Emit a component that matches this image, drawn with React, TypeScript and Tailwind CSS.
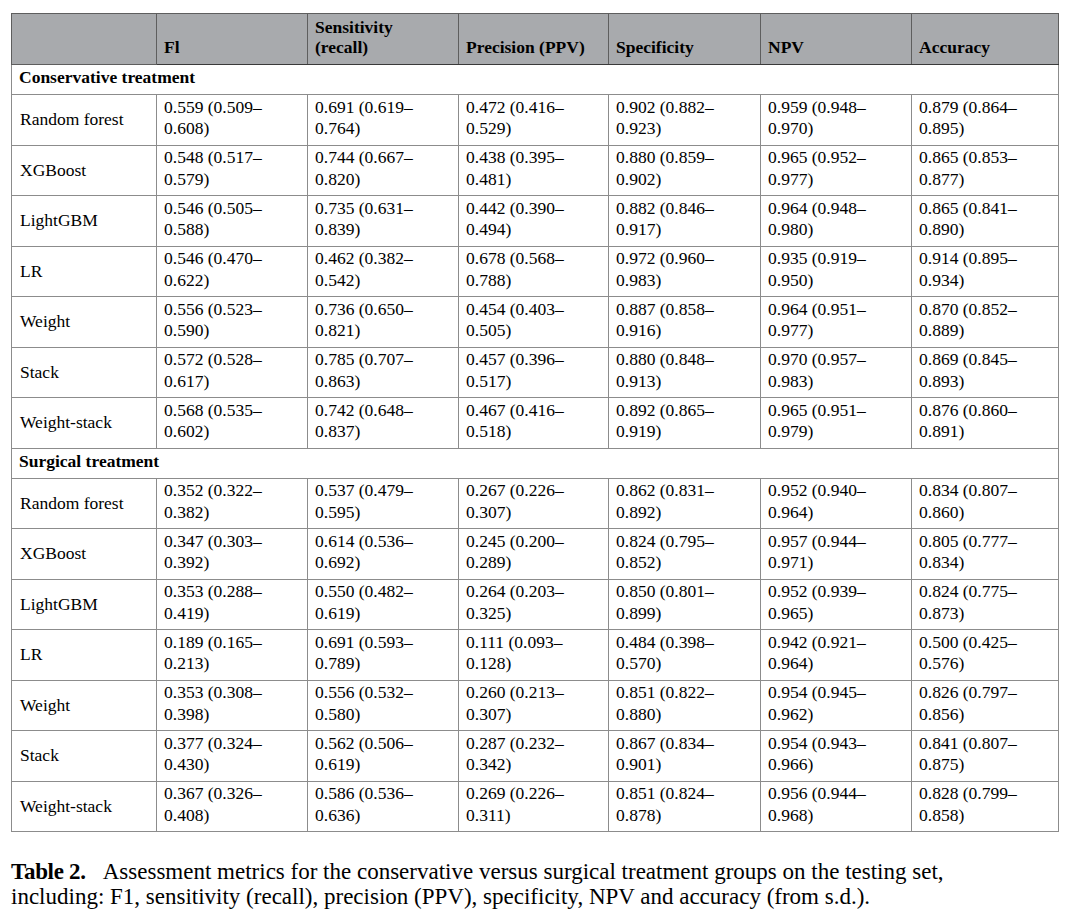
import type { FC } from 'react';

type Row = { name: string; values: [string, string][] };

const conservative: Row[] = [
  { name: 'Random forest', values: [['0.559 (0.509–', '0.608)'], ['0.691 (0.619–', '0.764)'], ['0.472 (0.416–', '0.529)'], ['0.902 (0.882–', '0.923)'], ['0.959 (0.948–', '0.970)'], ['0.879 (0.864–', '0.895)']] },
  { name: 'XGBoost', values: [['0.548 (0.517–', '0.579)'], ['0.744 (0.667–', '0.820)'], ['0.438 (0.395–', '0.481)'], ['0.880 (0.859–', '0.902)'], ['0.965 (0.952–', '0.977)'], ['0.865 (0.853–', '0.877)']] },
  { name: 'LightGBM', values: [['0.546 (0.505–', '0.588)'], ['0.735 (0.631–', '0.839)'], ['0.442 (0.390–', '0.494)'], ['0.882 (0.846–', '0.917)'], ['0.964 (0.948–', '0.980)'], ['0.865 (0.841–', '0.890)']] },
  { name: 'LR', values: [['0.546 (0.470–', '0.622)'], ['0.462 (0.382–', '0.542)'], ['0.678 (0.568–', '0.788)'], ['0.972 (0.960–', '0.983)'], ['0.935 (0.919–', '0.950)'], ['0.914 (0.895–', '0.934)']] },
  { name: 'Weight', values: [['0.556 (0.523–', '0.590)'], ['0.736 (0.650–', '0.821)'], ['0.454 (0.403–', '0.505)'], ['0.887 (0.858–', '0.916)'], ['0.964 (0.951–', '0.977)'], ['0.870 (0.852–', '0.889)']] },
  { name: 'Stack', values: [['0.572 (0.528–', '0.617)'], ['0.785 (0.707–', '0.863)'], ['0.457 (0.396–', '0.517)'], ['0.880 (0.848–', '0.913)'], ['0.970 (0.957–', '0.983)'], ['0.869 (0.845–', '0.893)']] },
  { name: 'Weight-stack', values: [['0.568 (0.535–', '0.602)'], ['0.742 (0.648–', '0.837)'], ['0.467 (0.416–', '0.518)'], ['0.892 (0.865–', '0.919)'], ['0.965 (0.951–', '0.979)'], ['0.876 (0.860–', '0.891)']] },
];

const surgical: Row[] = [
  { name: 'Random forest', values: [['0.352 (0.322–', '0.382)'], ['0.537 (0.479–', '0.595)'], ['0.267 (0.226–', '0.307)'], ['0.862 (0.831–', '0.892)'], ['0.952 (0.940–', '0.964)'], ['0.834 (0.807–', '0.860)']] },
  { name: 'XGBoost', values: [['0.347 (0.303–', '0.392)'], ['0.614 (0.536–', '0.692)'], ['0.245 (0.200–', '0.289)'], ['0.824 (0.795–', '0.852)'], ['0.957 (0.944–', '0.971)'], ['0.805 (0.777–', '0.834)']] },
  { name: 'LightGBM', values: [['0.353 (0.288–', '0.419)'], ['0.550 (0.482–', '0.619)'], ['0.264 (0.203–', '0.325)'], ['0.850 (0.801–', '0.899)'], ['0.952 (0.939–', '0.965)'], ['0.824 (0.775–', '0.873)']] },
  { name: 'LR', values: [['0.189 (0.165–', '0.213)'], ['0.691 (0.593–', '0.789)'], ['0.111 (0.093–', '0.128)'], ['0.484 (0.398–', '0.570)'], ['0.942 (0.921–', '0.964)'], ['0.500 (0.425–', '0.576)']] },
  { name: 'Weight', values: [['0.353 (0.308–', '0.398)'], ['0.556 (0.532–', '0.580)'], ['0.260 (0.213–', '0.307)'], ['0.851 (0.822–', '0.880)'], ['0.954 (0.945–', '0.962)'], ['0.826 (0.797–', '0.856)']] },
  { name: 'Stack', values: [['0.377 (0.324–', '0.430)'], ['0.562 (0.506–', '0.619)'], ['0.287 (0.232–', '0.342)'], ['0.867 (0.834–', '0.901)'], ['0.954 (0.943–', '0.966)'], ['0.841 (0.807–', '0.875)']] },
  { name: 'Weight-stack', values: [['0.367 (0.326–', '0.408)'], ['0.586 (0.536–', '0.636)'], ['0.269 (0.226–', '0.311)'], ['0.851 (0.824–', '0.878)'], ['0.956 (0.944–', '0.968)'], ['0.828 (0.799–', '0.858)']] },
];

const headers: [string, string?][] = [
  ['Fl'],
  ['Sensitivity', '(recall)'],
  ['Precision (PPV)'],
  ['Specificity'],
  ['NPV'],
  ['Accuracy'],
];

const cell = 'border border-[#8c8c8c] px-[7px] align-middle';

const DataRows: FC<{ title: string; rows: Row[] }> = ({ title, rows }) => (
  <>
    <tr>
      <td colSpan={7} className={`${cell} h-[30px] pb-[3px] font-bold`}>
        {title}
      </td>
    </tr>
    {rows.map((row) => (
      <tr key={row.name}>
        <td className={`${cell} h-[50.5px] pl-[8px]`}>{row.name}</td>
        {row.values.map(([a, b], i) => (
          <td key={i} className={`${cell} h-[50.5px] pb-[3px]`}>
            {a}
            <br />
            {b}
          </td>
        ))}
      </tr>
    ))}
  </>
);

export default function App() {
  return (
    <div className="w-[1080px] h-[917px] bg-white pt-[13px] pl-[11px] text-black font-['Liberation_Serif',serif]">
      <table className="table-fixed w-[1047px] border-collapse border-[1.5px] border-[#2e2e2e] text-[17.5px] leading-[21.5px]">
        <colgroup>
          <col className="w-[145px]" />
          <col className="w-[151px]" />
          <col className="w-[151px]" />
          <col className="w-[150px]" />
          <col className="w-[152px]" />
          <col className="w-[151px]" />
          <col className="w-[147px]" />
        </colgroup>
        <thead>
          <tr className="bg-[#a8aaad]">
            <th className="border border-[#5e5e5e] h-[51px]" />
            {headers.map(([a, b]) => (
              <th
                key={a}
                className="border border-[#5e5e5e] border-b-[#3a3a3a] h-[51px] px-[7px] pb-[7px] align-bottom text-left font-bold leading-[20px]"
              >
                {a}
                {b && (
                  <>
                    <br />
                    {b}
                  </>
                )}
              </th>
            ))}
          </tr>
        </thead>
        <tbody>
          <DataRows title="Conservative treatment" rows={conservative} />
          <DataRows title="Surgical treatment" rows={surgical} />
        </tbody>
      </table>

      <p className="mt-[28px] text-[23px] leading-[24.5px] w-[1060px] whitespace-nowrap">
        <span className="font-bold tracking-[-0.3px]">Table 2.</span>
        <span className="ml-[17px]">
          Assessment metrics for the conservative versus surgical treatment groups on the testing set,
        </span>
        <br />
        including: F1, sensitivity (recall), precision (PPV), specificity, NPV and accuracy (from s.d.).
      </p>
    </div>
  );
}
